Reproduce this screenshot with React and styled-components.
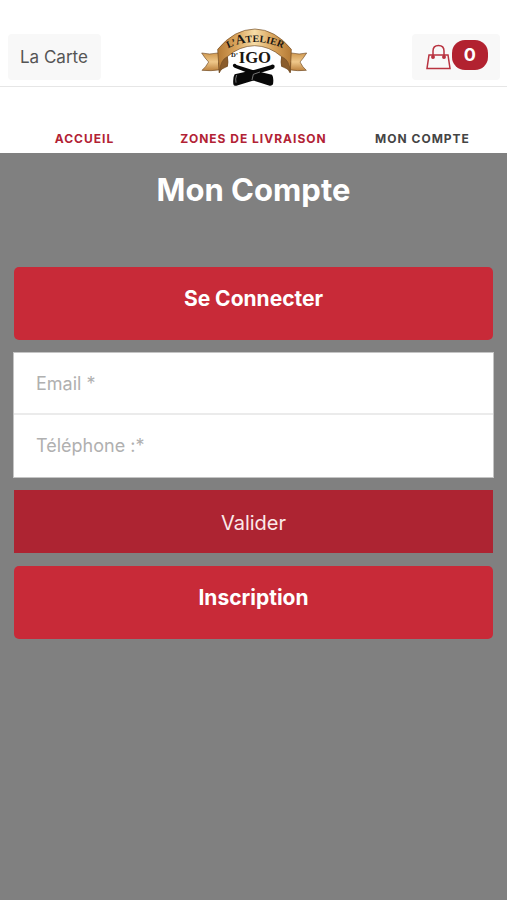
import { useState } from "react";
import styled, { createGlobalStyle } from "styled-components";

const GlobalStyle = createGlobalStyle`
  * {
    box-sizing: border-box;
  }
  body {
    margin: 0;
    background: #808080;
    font-family: Inter, "Liberation Sans", sans-serif;
  }
  button,
  input {
    font-family: inherit;
  }
`;

const Header = styled.header`
  display: grid;
  grid-template-columns: 1fr auto 1fr;
  padding: 28px 7px 0 8px;
  background: white;
  border-bottom: 1px solid #e6e6e6;
`;
const HeaderButton = styled.button`
  display: flex;
  align-items: ${(props) => (props.$end ? "flex-end" : "center")};
  justify-self: ${(props) => (props.$end ? "end" : "start")};
  gap: 1px;
  height: 46px;
  margin-top: 6px;
  padding: ${(props) => (props.$end ? "6px 12px 10px" : "0 13px 0 12px")};
  border: none;
  border-radius: 4px;
  background: #f8f8f8;
  color: #555;
  font-size: 17px;
  cursor: pointer;
`;
const LogoLink = styled.a`
  display: block;
  height: 58px;
  & svg {
    display: block;
    overflow: visible;
  }
`;
const Badge = styled.span`
  padding: 0 12px;
  border-radius: 13px;
  background: #b22230;
  color: white;
  font-size: 18px;
  font-weight: 700;
  line-height: 30px;
`;
const Nav = styled.nav`
  display: grid;
  grid-template-columns: repeat(3, 1fr);
  padding-top: 42px;
  background: white;
`;
const NavLink = styled.a`
  color: ${(props) => (props.$active ? "#444" : "#b22234")};
  font-size: 12px;
  font-weight: 700;
  letter-spacing: 1px;
  line-height: 20px;
  padding-bottom: 4px;
  text-align: center;
  text-decoration: none;
  text-transform: uppercase;
  white-space: nowrap;
`;
const Main = styled.main`
  display: flex;
  flex-direction: column;
  gap: 13px;
  padding: 17px 14px;
`;
const Title = styled.h1`
  margin: 0 0 44px;
  color: white;
  font-size: 31px;
  font-weight: 700;
  line-height: 40px;
  text-align: center;
`;
const PanelButton = styled.button`
  padding: 17px 16px 26px;
  border: none;
  border-radius: 5px;
  background: #c82a38;
  color: white;
  font-size: 21px;
  font-weight: 700;
  line-height: 30px;
  cursor: pointer;
`;
const Form = styled.form`
  display: flex;
  flex-direction: column;
  gap: 13px;
`;
const Fields = styled.div`
  background: white;
  box-shadow: 0 0 0 1px #c4c4c4;
`;
const Field = styled.input`
  display: block;
  width: 100%;
  height: 62px;
  padding: 0 22px 2px;
  border: none;
  background: white;
  color: #444;
  font-size: 18px;
  &:not(:last-child) {
    padding-bottom: 0;
    border-bottom: 2px solid #ebebeb;
  }
  &::placeholder {
    color: #b0b0b0;
    opacity: 1;
  }
`;
const SubmitButton = styled.button`
  height: 63px;
  padding: 2px 16px 0;
  border: none;
  background: #ad2432;
  color: #fbe9e9;
  font-size: 20px;
  cursor: pointer;
`;

const Logo = () => (
  <svg width="108" height="60" viewBox="30 24 324 180" aria-hidden="true">
    <defs>
      <linearGradient id="gold" x1="0" x2="1" y1="0" y2="0">
        <stop offset="0" stopColor="#b57a35" />
        <stop offset="0.25" stopColor="#d9a45c" />
        <stop offset="0.5" stopColor="#f6dca6" />
        <stop offset="0.75" stopColor="#d9a45c" />
        <stop offset="1" stopColor="#b57a35" />
      </linearGradient>
      <linearGradient id="tail" x1="0" x2="0" y1="0" y2="1">
        <stop offset="0" stopColor="#cf9850" />
        <stop offset="0.5" stopColor="#efc88a" />
        <stop offset="1" stopColor="#bd823e" />
      </linearGradient>
      <path id="arch" d="M94 96Q195 36 298 96" />
    </defs>
    <g stroke="#6f4a22" strokeWidth="2" strokeLinejoin="round">
      <path
        fill="url(#tail)"
        d="M84 99Q58 105 35 99Q45 115 56 126Q47 142 36 151Q62 154 92 149L112 139V111Z"
      />
      <path
        fill="url(#tail)"
        d="M304 99Q328 105 350 99Q340 115 330 126Q338 142 349 151Q324 154 296 149L275 139V111Z"
      />
      <path fill="#8a5c2b" d="M112 110Q116 128 112 139Q98 139 88 158L86 128Z" />
      <path fill="#8a5c2b" d="M275 110Q271 128 275 139Q290 139 300 158L302 128Z" />
      <path
        fill="url(#gold)"
        d="M83 88Q132 28 195 27Q255 28 304 88L301 158Q299 119 275 110Q238 78 194 77Q148 78 112 110Q91 119 88 158Z"
      />
    </g>
    <g fill="#1c1712" fontFamily="Liberation Serif, serif" fontWeight="700">
      <text fontSize="30" textAnchor="middle">
        <textPath href="#arch" startOffset="50%">
          L’<tspan fontSize="40">A</tspan>TELIER
        </textPath>
      </text>
      <text x="123" y="110" fontSize="20">
        D’
      </text>
      <text x="146" y="130" fontSize="50">
        IGO
      </text>
    </g>
    <g fill="#080808">
      <path d="M129 134Q134 128 140 135L190 151L246 164Q252 172 249 193Q246 198 239 197L185 180L182 162L134 143Q127 140 129 134Z" />
      <path d="M253 136Q248 131 242 136L188 151L134 163Q128 172 130 193Q132 199 139 197L193 181L207 160L249 147Q256 143 253 136Z" />
      <path
        d="M186 180L190 163L210 156M140 165Q135 177 138 188"
        fill="none"
        stroke="#aaa"
        strokeWidth="2"
      />
    </g>
  </svg>
);

const BagIcon = () => (
  <svg
    width="27"
    height="26"
    viewBox="0 0 27 26"
    fill="none"
    stroke="#b8323f"
    strokeWidth="1.5"
    aria-hidden="true"
  >
    <path d="M5 11H24L26 24.5H3Z" />
    <path d="M9 13V7Q9 1.5 14.5 1.5T20 7V13" />
    <circle cx="9" cy="13" r="1.2" fill="#b8323f" />
    <circle cx="20" cy="13" r="1.2" fill="#b8323f" />
  </svg>
);

const App = () => {
  const [email, setEmail] = useState("");
  const [phone, setPhone] = useState("");

  return (
    <>
      <GlobalStyle />
      <Header>
        <HeaderButton type="button">La Carte</HeaderButton>
        <LogoLink href="#accueil" aria-label="L’Atelier d’Igo">
          <Logo />
        </LogoLink>
        <HeaderButton type="button" $end aria-label="Panier : 0">
          <BagIcon />
          <Badge>0</Badge>
        </HeaderButton>
      </Header>
      <Nav>
        <NavLink href="#accueil">Accueil</NavLink>
        <NavLink href="#zones">Zones de livraison</NavLink>
        <NavLink href="#compte" $active>
          Mon compte
        </NavLink>
      </Nav>
      <Main>
        <Title>Mon Compte</Title>
        <PanelButton type="button">Se Connecter</PanelButton>
        <Form onSubmit={(e) => e.preventDefault()}>
          <Fields>
            <Field
              type="email"
              aria-label="Email"
              placeholder="Email *"
              value={email}
              onChange={(e) => setEmail(e.target.value)}
            />
            <Field
              type="tel"
              aria-label="Téléphone"
              placeholder="Téléphone :*"
              value={phone}
              onChange={(e) => setPhone(e.target.value)}
            />
          </Fields>
          <SubmitButton type="submit">Valider</SubmitButton>
        </Form>
        <PanelButton type="button">Inscription</PanelButton>
      </Main>
    </>
  );
};
export default App;
